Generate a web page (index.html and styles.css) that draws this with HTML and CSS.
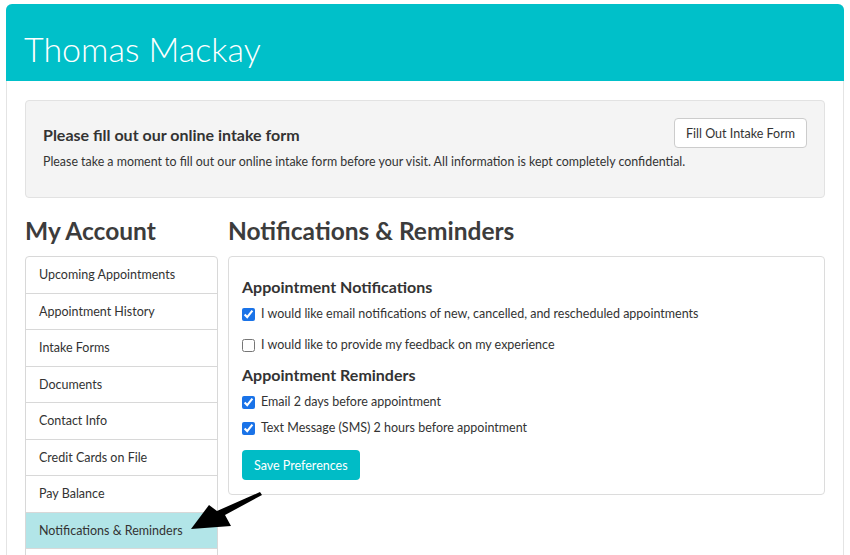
FILE: index.html
```html
<!DOCTYPE html>
<html lang="en">
<head>
    <meta charset="UTF-8">
    <meta name="viewport" content="width=device-width, initial-scale=1.0">
    <title>Thomas Mackay - My Account</title>
    <link rel="stylesheet" href="styles.css">
</head>
<body>
    <div class="card">
        <header class="card-header">Thomas Mackay</header>
        <div class="card-body">
            <div class="intake-alert">
                <button class="btn-default">Fill Out Intake Form</button>
                <h4>Please fill out our online intake form</h4>
                <p>Please take a moment to fill out our online intake form before your visit. All information is kept completely confidential.</p>
            </div>

            <div class="account">
                <aside class="sidebar">
                    <h2>My Account</h2>
                    <ul class="nav-list">
                        <li><a href="#">Upcoming Appointments</a></li>
                        <li><a href="#">Appointment History</a></li>
                        <li><a href="#">Intake Forms</a></li>
                        <li><a href="#">Documents</a></li>
                        <li><a href="#">Contact Info</a></li>
                        <li><a href="#">Credit Cards on File</a></li>
                        <li><a href="#">Pay Balance</a></li>
                        <li class="active"><a href="#">Notifications &amp; Reminders</a></li>
                        <li><a href="#">Log Out</a></li>
                    </ul>
                </aside>
                <section class="content">
                    <h2>Notifications &amp; Reminders</h2>
                    <form class="panel">
                        <h3>Appointment Notifications</h3>
                        <label class="check first"><input type="checkbox" checked> I would like email notifications of new, cancelled, and rescheduled appointments</label>
                        <label class="check last"><input type="checkbox"> I would like to provide my feedback on my experience</label>
                        <h3>Appointment Reminders</h3>
                        <label class="check"><input type="checkbox" checked> Email 2 days before appointment</label>
                        <label class="check"><input type="checkbox" checked> Text Message (SMS) 2 hours before appointment</label>
                        <button type="submit" class="btn-primary">Save Preferences</button>
                    </form>
                </section>
            </div>
        </div>
    </div>

    <!-- стрелка-подсказка поверх меню -->
    <svg class="pointer-arrow" width="80" height="50" viewBox="0 0 80 50">
        <path d="M69 0 L71 3 L34 23 L40 34 L0 37 L18 13 L26 19 Z" fill="#000"/>
    </svg>
</body>
</html>
```

FILE: styles.css
```css
/* Общие стили */
body {
    font-family: 'Lato', 'Open Sans', sans-serif;
    margin: 0;
    padding: 4px 6px 0;
    background-color: #fff;
    color: #3a3a3a;
    font-size: 13px;
}
.card {
    border: 1px solid #e4e4e4;
    border-top: none;
    border-radius: 6px 6px 0 0;
    min-height: 560px;
}
.card-header {
    background-color: #00c0c9;
    color: white;
    font-size: 34px;
    font-weight: 300;
    padding: 0 18px;
    height: 77px;
    line-height: 90px;
    border-radius: 6px 6px 0 0;
    margin: 0 -1px;
}
.card-body {
    padding: 19px 18px 0;
}
.intake-alert {
    background: #f4f4f4;
    border: 1px solid #e2e2e2;
    border-radius: 4px;
    padding: 17px 17px 27px;
    min-height: 50px;
}
.intake-alert h4 {
    margin: 8px 0 9px;
    font-size: 16px;
    font-weight: 700;
    color: #333;
    line-height: 18px;
}
.intake-alert p {
    margin: 0;
    font-size: 12.4px;
    color: #333;
    line-height: 17px;
}
.btn-default {
    float: right;
    background: white;
    border: 1px solid #ccc;
    border-radius: 4px;
    padding: 0 11px;
    height: 30px;
    font-family: inherit;
    font-size: 12.5px;
    color: #333;
    white-space: nowrap;
    cursor: pointer;
}
.account {
    display: flex;
    gap: 10px;
    margin-top: 16px;
}
.account h2 {
    margin: 0 0 9px;
    font-size: 24.5px;
    font-weight: 700;
    color: #3c3c3c;
    line-height: 33px;
}
.sidebar {
    width: 193px;
    flex: none;
}
.nav-list {
    list-style: none;
    margin: 0;
    padding: 0;
    border: 1px solid #d8d8d8;
    border-radius: 4px 4px 0 0;
}
.nav-list li {
    border-top: 1px solid #d8d8d8;
}
.nav-list li:first-child {
    border-top: none;
}
.nav-list a {
    display: block;
    padding: 0 13px;
    height: 35.5px;
    line-height: 35px;
    color: #333;
    text-decoration: none;
    font-size: 12.5px;
}
.nav-list li.active {
    background: #b2e5e8;
}
.content {
    flex: 1;
}
.panel {
    border: 1px solid #dcdcdc;
    border-radius: 4px;
    padding: 19px 13px 14px;
}
.panel h3 {
    margin: 0 0 7px;
    font-size: 16px;
    font-weight: 700;
    color: #333;
    line-height: 22px;
}
.check {
    display: flex;
    align-items: center;
    gap: 6px;
    font-size: 12.5px;
    color: #333;
    margin-bottom: 8px;
    line-height: 18px;
}
.check.first {
    margin-bottom: 13px;
}
.check.last {
    margin-bottom: 10px;
}
.check input {
    margin: 0;
    width: 13px;
    height: 13px;
    accent-color: #1a73e8;
}
.btn-primary {
    margin-top: 5px;
    background: #00bcc6;
    color: white;
    border: none;
    border-radius: 4px;
    height: 30px;
    padding: 0 12px;
    font-family: inherit;
    font-size: 12.5px;
    cursor: pointer;
}
.pointer-arrow {
    position: absolute;
    left: 191px;
    top: 492px;
}
```
